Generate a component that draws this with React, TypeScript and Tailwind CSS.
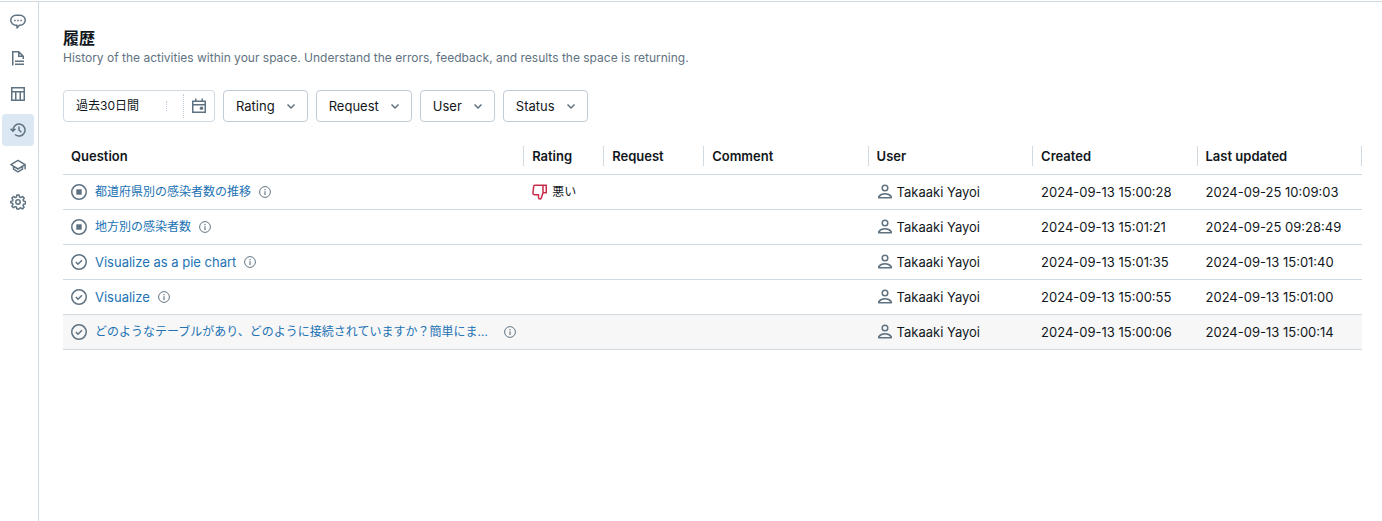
import type { ReactNode } from 'react';

type IconProps = { className?: string };

function Svg({ className = 'size-4', children }: IconProps & { children: ReactNode }) {
  return (
    <svg
      viewBox="0 0 16 16"
      className={`${className} shrink-0`}
      fill="none"
      stroke="currentColor"
      strokeWidth="1.5"
      aria-hidden="true"
    >
      {children}
    </svg>
  );
}

const ChatIcon = () => (
  <Svg>
    <path d="M6 1.25h4a5.25 5 0 0 1 0 10H9.4L7 14v-2.75H6a5.25 5 0 0 1 0-10Z" strokeLinejoin="round" />
    <path d="M4.2 6.5h1.5M7.25 6.5h1.5M10.3 6.5h1.5" />
  </Svg>
);

const DocumentIcon = () => (
  <Svg>
    <path d="M2.75 15.5V1.75h6l4.5 4.5V9M8.75 1.75v4.5h4.5M5 11.25h9M5 14.25h9" />
  </Svg>
);

const TableIcon = () => (
  <Svg>
    <path d="M1.75 1.75h12.5v12.5H1.75zM1.75 5.75h12.5M5.75 5.75v8.5M10.25 5.75v8.5" />
  </Svg>
);

const HistoryIcon = () => (
  <Svg>
    <path d="M3 8.8V8a6 6 0 1 1 2 4.5M.6 6.8 3 9.2l2.4-2.4M9 4.5V8l2.3 2.3" />
  </Svg>
);

const SchoolIcon = () => (
  <Svg>
    <path d="M8 2.4.9 6.7 8 11l7.1-4.3zM3.5 8.2v3L8 13.9l4.5-2.7v-3M15.1 6.5v4.8" strokeLinejoin="round" />
  </Svg>
);

const GearIcon = () => (
  <Svg>
    <path
      strokeLinejoin="round"
      d="M6.9 1h2.2l.5 2.1 1.1.5 1.9-1.1 1.6 1.6-1.1 1.8.4 1.1 2 .6v2.2l-2 .5-.5 1.1 1.1 1.9-1.6 1.6-1.8-1.1-1.1.4L9.1 15H6.9l-.5-2-1.1-.4-1.8 1.1-1.6-1.6L3 10.300 2.500 9.200.800 8.700V7.400L2.600 6.900 3 5.800 1.900 4 3.500 2.500l1.800 1.100 1.100-.5z"
    />
    <circle cx="8" cy="8" r="2.2" />
  </Svg>
);

const CalendarIcon = () => (
  <Svg>
    <path d="M1.75 3.25h12.5v11H1.75zM1.75 6.75h12.5M4.75 .5v3M11.25 .5v3" />
    <circle cx="10.5" cy="10.2" r="1.75" fill="currentColor" stroke="none" />
  </Svg>
);

const ChevronIcon = () => (
  <Svg className="size-4 text-[#5f7281]">
    <path d="m4.5 6.500 3.500 3.500 3.500-3.500" />
  </Svg>
);

const StopIcon = () => (
  <Svg className="size-4 text-[#5f7281]">
    <circle cx="8" cy="8" r="7.25" />
    <path d="M5.300 5.300h5.400v5.400H5.300z" fill="currentColor" stroke="none" />
  </Svg>
);

const CheckIcon = () => (
  <Svg className="size-4 text-[#5f7281]">
    <circle cx="8" cy="8" r="7.25" />
    <path d="m4.800 8 2.200 2.200 4-4" />
  </Svg>
);

const InfoIcon = () => (
  <Svg className="size-3">
    <circle cx="8" cy="8" r="7.2" strokeWidth="1.3" />
    <path d="M8 7v5M8 4v1.7" />
  </Svg>
);

const ThumbsDownIcon = () => (
  <Svg className="size-4 text-[#c82d4c]">
    <path
      strokeLinejoin="round"
      d="M2.700 1.250h11.550v7.500H11L9.300 14c-.2.700-.7 1-1.300 1-.8 0-1.500-.7-1.500-1.500v-2.750h-3.800C1.600 10.750.800 9.900.950 8.800l.7-6.100C1.700 1.900 2.100 1.250 2.700 1.250ZM11 1.250v7.500"
    />
  </Svg>
);

const UserIcon = () => (
  <Svg className="size-4 text-[#5f7281]">
    <circle cx="8" cy="4" r="2.800" />
    <path d="M1.750 13.750v-1C3 10.900 5.300 9.750 8 9.750s5 1.150 6.250 3v1z" strokeLinejoin="round" />
  </Svg>
);

const navItems = [
  { label: 'Chat', Icon: ChatIcon },
  { label: 'Instructions', Icon: DocumentIcon },
  { label: 'Data', Icon: TableIcon },
  { label: 'History', Icon: HistoryIcon },
  { label: 'Training', Icon: SchoolIcon },
  { label: 'Settings', Icon: GearIcon },
];

const filters = ['Rating', 'Request', 'User', 'Status'];

const columns = [
  { name: 'Question', width: 'w-[35.5%]' },
  { name: 'Rating', width: 'w-20' },
  { name: 'Request', width: 'w-[100px]' },
  { name: 'Comment', width: '' },
  { name: 'User', width: '' },
  { name: 'Created', width: '' },
  { name: 'Last updated', width: '' },
];

const rows = [
  { question: '都道府県別の感染者数の推移', japanese: true, done: false, rating: '悪い', created: '2024-09-13 15:00:28', updated: '2024-09-25 10:09:03' },
  { question: '地方別の感染者数', japanese: true, done: false, rating: '', created: '2024-09-13 15:01:21', updated: '2024-09-25 09:28:49' },
  { question: 'Visualize as a pie chart', done: true, rating: '', created: '2024-09-13 15:01:35', updated: '2024-09-13 15:01:40' },
  { question: 'Visualize', done: true, rating: '', created: '2024-09-13 15:00:55', updated: '2024-09-13 15:01:00' },
  {
    question: 'どのようなテーブルがあり、どのように接続されていますか？簡単にまとめて',
    japanese: true,
    done: true,
    rating: '',
    created: '2024-09-13 15:00:06',
    updated: '2024-09-13 15:00:14',
    active: true,
  },
];

export default function App() {
  return (
    <div className="flex min-h-screen flex-col bg-white pt-px font-['Inter','Noto_Sans_CJK_JP',sans-serif] text-[13px] leading-5 text-[#11171c]">
      <div className="flex grow border-t border-[#d1d9e1]">
        <nav className="flex w-[39px] shrink-0 flex-col gap-1 border-r border-[#d1d9e1] py-1 pl-0.5">
          {navItems.map(({ label, Icon }) => (
            <button
              key={label}
              aria-label={label}
              className={`flex size-8 items-center justify-center rounded text-[#5f7281] ${label === 'History' ? 'bg-[#dbe7f2]' : ''}`}
            >
              <Icon />
            </button>
          ))}
        </nav>

        <main className="min-w-0 grow pt-6 pr-5 pl-6">
          <h1 className="text-base leading-6 font-bold">履歴</h1>
          <p className="text-xs leading-4 text-[#5f7281]">
            History of the activities within your space. Understand the errors, feedback, and results the space is returning.
          </p>

          <div className="mt-6 flex gap-2">
            <button className="flex h-8 w-38 items-center rounded border border-[#d1d9e1] pr-[7px] pl-3">
              <span className="grow text-left text-xs">過去30日間</span>
              <span className="mr-4 h-2.5 border-l border-dotted border-[#c0cdd8]" />
              <span className="mr-[7px] h-6 border-l border-dotted border-[#c0cdd8]" />
              <span className="text-[#5f7281]">
                <CalendarIcon />
              </span>
            </button>
            {filters.map((name) => (
              <button key={name} className="flex h-8 items-center gap-2 rounded border border-[#c0cdd8] pr-2 pl-3">
                {name}
                <ChevronIcon />
              </button>
            ))}
          </div>

          <table className="mt-4 w-full table-fixed border-separate border-spacing-0">
            <thead>
              <tr>
                {columns.map(({ name, width }) => (
                  <th key={name} className={`border-b border-[#d1d9e1] py-2 text-left font-semibold ${width}`}>
                    <div className="border-r border-[#d1d9e1] pl-2">{name}</div>
                  </th>
                ))}
              </tr>
            </thead>
            <tbody className="[&_td]:h-[35px] [&_td]:border-b [&_td]:border-[#d1d9e1] [&_td]:px-2">
              {rows.map((row) => (
                <tr key={row.created} className={row.active ? 'bg-[#f7f7f7]' : ''}>
                  <td>
                    <div className="flex items-center gap-2">
                      {row.done ? <CheckIcon /> : <StopIcon />}
                      <a href="#" className={`truncate text-[#2272b4] ${row.japanese ? 'text-xs leading-5' : ''}`}>
                        {row.question}
                      </a>
                      <button aria-label="Details" className="shrink-0 text-[#5f7281]">
                        <InfoIcon />
                      </button>
                    </div>
                  </td>
                  <td>
                    {row.rating && (
                      <div className="flex items-center gap-1 text-xs leading-5">
                        <ThumbsDownIcon />
                        {row.rating}
                      </div>
                    )}
                  </td>
                  <td />
                  <td />
                  <td>
                    <div className="flex items-center gap-1">
                      <UserIcon />
                      Takaaki Yayoi
                    </div>
                  </td>
                  <td>{row.created}</td>
                  <td>{row.updated}</td>
                </tr>
              ))}
            </tbody>
          </table>
        </main>
      </div>
    </div>
  );
}
